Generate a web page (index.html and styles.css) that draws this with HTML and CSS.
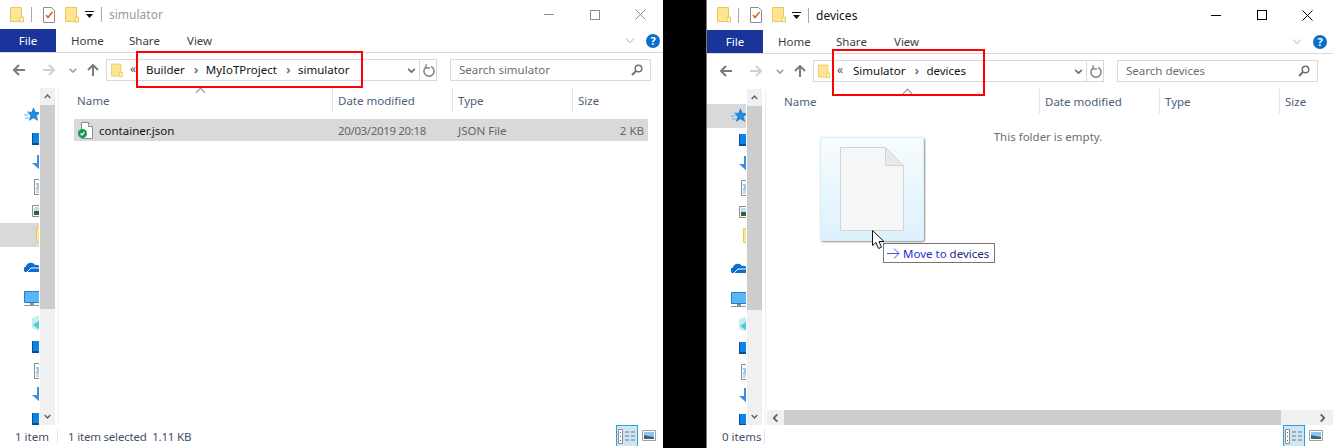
FILE: index.html
```html
<!DOCTYPE html>
<html lang="en">
<head>
    <meta charset="UTF-8">
    <title>Moving container.json to devices</title>
    <link rel="stylesheet" href="styles.css">
</head>
<body>
    <svg class="icon-defs" width="0" height="0">
        <symbol id="i-folder" viewBox="0 0 14 16"><path d="M.5.5h11v14H.5z" fill="#fde594" stroke="#e9c862"/><path d="M10 10h3.5v5H10z" fill="#fff3bd" stroke="#e9c862"/></symbol>
        <symbol id="i-check-doc" viewBox="0 0 14 16"><path d="M1.500.500h8l3 3v12h-11z" fill="#fff" stroke="#8c8c8c"/><path d="M4 8l2 2.500L10.500 5" fill="none" stroke="#e4572a" stroke-width="1.500"/></symbol>
        <symbol id="i-qa-arrow" viewBox="0 0 9 9"><path d="M0 1h9v1H0zM1 4h7L4.500 8z" fill="#111"/></symbol>
        <symbol id="i-close" viewBox="0 0 11 11"><path d="M.5.500l10 10M10.500.500l-10 10" fill="none" stroke="currentColor"/></symbol>
        <symbol id="i-back" viewBox="0 0 12 12"><path d="M6 1L1 6l5 5M1 6h11" fill="none" stroke="currentColor" stroke-width="2"/></symbol>
        <symbol id="i-forward" viewBox="0 0 12 12"><path d="M6 1l5 5-5 5M11 6H0" fill="none" stroke="currentColor" stroke-width="2"/></symbol>
        <symbol id="i-up" viewBox="0 0 12 12"><path d="M1 6l5-5 5 5M6 1v11" fill="none" stroke="currentColor" stroke-width="2"/></symbol>
        <symbol id="i-chevron" viewBox="0 0 10 6"><path d="M1 1l4 4 4-4" fill="none" stroke="currentColor" stroke-width="2"/></symbol>
        <symbol id="i-chevron-thin" viewBox="0 0 10 6"><path d="M1 .5l4 4 4-4" fill="none" stroke="currentColor"/></symbol>
        <symbol id="i-refresh" viewBox="0 0 12 14"><path d="M4 3.500a5 5 0 1 0 4 0" fill="none" stroke="currentColor" stroke-width="1.600"/><path d="M3 1v4h4" fill="none" stroke="currentColor" stroke-width="1.300"/></symbol>
        <symbol id="i-search" viewBox="0 0 12 12"><circle cx="7.500" cy="4.500" r="3.300" fill="none" stroke="#6f6f6f" stroke-width="1.500"/><path d="M5 7l-4 4" stroke="#6f6f6f" stroke-width="2"/></symbol>
        <symbol id="i-star" viewBox="0 0 16 16"><path d="M9.500 1l1.700 4.300 4.800.3-3.700 3 1.300 4.700-4.100-2.600-4 2.600 1.200-4.700L4 5.600l3.800-.3z" fill="#1c8ee6" stroke="#0c63b8" stroke-width=".6"/><path d="M0 8h4M1 11h4M3 5h3" stroke="#62b4f0"/></symbol>
        <symbol id="i-desktop" viewBox="0 0 16 16"><path d="M0 2h16v12H0z" fill="#0b84e4"/><path d="M0 12h16v2H0zM0 2h1v12H0z" fill="#0a4f96"/></symbol>
        <symbol id="i-download" viewBox="0 0 16 16"><path d="M5 0h6v8h5l-8 7-8-7h5z" fill="#3a8fe0"/></symbol>
        <symbol id="i-doc" viewBox="0 0 16 16"><path d="M2.500.5h11v15h-11z" fill="#fff" stroke="#8d8d8d"/><path d="M4 5h8M5 7h8M4 9h8" stroke="#2f8fe0"/><path d="M4 11h8M4 13h8" stroke="#aaa"/></symbol>
        <symbol id="i-picture" viewBox="0 0 16 16"><path d="M.5 2.500h15v11H.5z" fill="#fff" stroke="#8d8d8d"/><path d="M2 4h12v4H2z" fill="#bcdcf5"/><path d="M2 8h12v4H2z" fill="#3d5c46"/></symbol>
        <symbol id="i-cloud" viewBox="0 0 16 16"><path d="M1 13a3 3 0 0 1 1-5.500A5 5 0 0 1 11 6a3.500 3.500 0 0 1 5 3v4z" fill="#0b6fd0"/><path d="M3 13l4-4h9" fill="none" stroke="#fff"/></symbol>
        <symbol id="i-monitor" viewBox="0 0 16 16"><path d="M.5.5h15v11H.5z" fill="#58b8f5" stroke="#2b7dc8"/><path d="M6 12h4v2H6zM0 14h16v1H0z" fill="#7f97ab"/></symbol>
        <symbol id="i-cube" viewBox="0 0 16 16"><path d="M0 3l8-3v16l-8-3z" fill="#c5efef"/><path d="M1 10l7-5v10z" fill="#48cdd3"/></symbol>
        <symbol id="i-json" viewBox="0 0 16 17"><path d="M3.500.5h7l4 4v12h-11z" fill="#fff" stroke="#8d8d8d"/><path d="M10.500.5v4h4" fill="#eee" stroke="#8d8d8d"/><circle cx="4.500" cy="11.500" r="4.500" fill="#0f9d4b"/><path d="M2.500 11.500l1.500 1.500 2.500-3" fill="none" stroke="#fff" stroke-width="1.200"/></symbol>
        <symbol id="i-details" viewBox="0 0 18 15"><path d="M.5.5h4v14h-4z" fill="#fff" stroke="#8c8c8c"/><path d="M2 3h1v1H2z" fill="#d33"/><path d="M2 7h1v1H2zM2 11h1v1H2z" fill="#555"/><path d="M7 3h4M13 3h4M7 7h4M13 7h4M7 11h4M13 11h4" stroke="#777"/></symbol>
        <symbol id="i-thumbs" viewBox="0 0 14 11"><path d="M.5.500h13v10H.5z" fill="#fff" stroke="#a0a0a0"/><path d="M2 2h10v7H2z" fill="#8fc4ee"/><path d="M2 9V5l4 1 6 1v2z" fill="#3f6470"/></symbol>
        <symbol id="i-move" viewBox="0 0 13 11"><path d="M7 .500l5 5-5 5M12 5.500H0" fill="none" stroke="currentColor"/></symbol>
    </svg>

    <section class="window window-left">
        <div class="titlebar">
            <svg class="qa-folder"><use href="#i-folder"/></svg>
            <span class="qa-sep"></span>
            <svg class="qa-doc"><use href="#i-check-doc"/></svg>
            <svg class="qa-folder qa-folder-2"><use href="#i-folder"/></svg>
            <svg class="qa-arrow"><use href="#i-qa-arrow"/></svg>
            <span class="qa-sep"></span>
            <span class="title">simulator</span>
            <div class="win-controls">
                <span class="win-btn"><span class="win-min"></span></span>
                <span class="win-btn"><span class="win-max"></span></span>
                <span class="win-btn"><svg class="win-close"><use href="#i-close"/></svg></span>
            </div>
        </div>
        <div class="ribbon">
            <span class="tab-file">File</span>
            <span class="tab">Home</span>
            <span class="tab">Share</span>
            <span class="tab">View</span>
            <svg class="ribbon-chevron"><use href="#i-chevron-thin"/></svg>
            <span class="help">?</span>
        </div>
        <div class="addressbar">
            <svg class="nav-back"><use href="#i-back"/></svg>
            <svg class="nav-forward"><use href="#i-forward"/></svg>
            <svg class="nav-recent"><use href="#i-chevron"/></svg>
            <svg class="nav-up"><use href="#i-up"/></svg>
            <div class="address">
                <svg class="address-folder"><use href="#i-folder"/></svg>
                <span class="overflow">&laquo;</span>
                <span class="crumb">Builder</span><span class="crumb-sep">&rsaquo;</span>
                <span class="crumb">MyIoTProject</span><span class="crumb-sep">&rsaquo;</span>
                <span class="crumb">simulator</span>
                <svg class="address-chevron"><use href="#i-chevron"/></svg>
                <span class="address-refresh"><svg><use href="#i-refresh"/></svg></span>
            </div>
            <div class="search">
                <span>Search simulator</span>
                <svg><use href="#i-search"/></svg>
            </div>
        </div>
        <div class="main">
            <nav class="tree">
                <div class="tree-row"><svg><use href="#i-star"/></svg></div>
                <div class="tree-row child"><svg><use href="#i-desktop"/></svg></div>
                <div class="tree-row child"><svg><use href="#i-download"/></svg></div>
                <div class="tree-row child"><svg><use href="#i-doc"/></svg></div>
                <div class="tree-row child"><svg><use href="#i-picture"/></svg></div>
                <div class="tree-row child selected"><svg class="tree-folder"><use href="#i-folder"/></svg></div>
                <div class="tree-row group"><svg><use href="#i-cloud"/></svg></div>
                <div class="tree-row group"><svg><use href="#i-monitor"/></svg></div>
                <div class="tree-row child"><svg><use href="#i-cube"/></svg></div>
                <div class="tree-row child"><svg><use href="#i-desktop"/></svg></div>
                <div class="tree-row child"><svg><use href="#i-doc"/></svg></div>
                <div class="tree-row child"><svg><use href="#i-download"/></svg></div>
                <div class="tree-row child"><svg><use href="#i-desktop"/></svg></div>
            </nav>
            <div class="vscroll">
                <svg class="scroll-up"><use href="#i-chevron"/></svg>
                <div class="vscroll-thumb"></div>
                <svg class="scroll-down"><use href="#i-chevron"/></svg>
            </div>
            <div class="files">
                <span class="sort-caret"></span>
                <div class="columns">
                    <span class="col-name">Name</span>
                    <span class="col">Date modified</span>
                    <span class="col">Type</span>
                    <span class="col">Size</span>
                </div>
                <div class="file-row">
                    <span class="file-name"><svg><use href="#i-json"/></svg>container.json</span>
                    <span class="file-meta file-date">20/03/2019 20:18</span>
                    <span class="file-meta">JSON File</span>
                    <span class="file-size">2 KB</span>
                </div>
            </div>
        </div>
        <div class="status">
            <span class="status-count">1 item</span>
            <span class="status-sel">1 item selected&nbsp; 1.11 KB</span>
            <span class="view-btn view-on"><svg><use href="#i-details"/></svg></span>
            <span class="view-btn"><svg class="thumbs"><use href="#i-thumbs"/></svg></span>
        </div>
        <div class="callout callout-left"></div>
    </section>

    <section class="window window-right">
        <div class="titlebar">
            <svg class="qa-folder"><use href="#i-folder"/></svg>
            <span class="qa-sep"></span>
            <svg class="qa-doc"><use href="#i-check-doc"/></svg>
            <svg class="qa-folder qa-folder-2"><use href="#i-folder"/></svg>
            <svg class="qa-arrow"><use href="#i-qa-arrow"/></svg>
            <span class="qa-sep"></span>
            <span class="title">devices</span>
            <div class="win-controls">
                <span class="win-btn"><span class="win-min"></span></span>
                <span class="win-btn"><span class="win-max"></span></span>
                <span class="win-btn"><svg class="win-close"><use href="#i-close"/></svg></span>
            </div>
        </div>
        <div class="ribbon">
            <span class="tab-file">File</span>
            <span class="tab">Home</span>
            <span class="tab">Share</span>
            <span class="tab">View</span>
            <svg class="ribbon-chevron"><use href="#i-chevron-thin"/></svg>
            <span class="help">?</span>
        </div>
        <div class="addressbar">
            <svg class="nav-back"><use href="#i-back"/></svg>
            <svg class="nav-forward"><use href="#i-forward"/></svg>
            <svg class="nav-recent"><use href="#i-chevron"/></svg>
            <svg class="nav-up"><use href="#i-up"/></svg>
            <div class="address">
                <svg class="address-folder"><use href="#i-folder"/></svg>
                <span class="overflow">&laquo;</span>
                <span class="crumb">Simulator</span><span class="crumb-sep">&rsaquo;</span>
                <span class="crumb">devices</span>
                <svg class="address-chevron"><use href="#i-chevron"/></svg>
                <span class="address-refresh"><svg><use href="#i-refresh"/></svg></span>
            </div>
            <div class="search">
                <span>Search devices</span>
                <svg><use href="#i-search"/></svg>
            </div>
        </div>
        <div class="main">
            <nav class="tree">
                <div class="tree-row selected"><svg><use href="#i-star"/></svg></div>
                <div class="tree-row child"><svg><use href="#i-desktop"/></svg></div>
                <div class="tree-row child"><svg><use href="#i-download"/></svg></div>
                <div class="tree-row child"><svg><use href="#i-doc"/></svg></div>
                <div class="tree-row child"><svg><use href="#i-picture"/></svg></div>
                <div class="tree-row child"><svg class="tree-folder"><use href="#i-folder"/></svg></div>
                <div class="tree-row group"><svg><use href="#i-cloud"/></svg></div>
                <div class="tree-row group"><svg><use href="#i-monitor"/></svg></div>
                <div class="tree-row child"><svg><use href="#i-cube"/></svg></div>
                <div class="tree-row child"><svg><use href="#i-desktop"/></svg></div>
                <div class="tree-row child"><svg><use href="#i-doc"/></svg></div>
                <div class="tree-row child"><svg><use href="#i-download"/></svg></div>
                <div class="tree-row child"><svg><use href="#i-desktop"/></svg></div>
            </nav>
            <div class="vscroll">
                <svg class="scroll-up"><use href="#i-chevron"/></svg>
                <div class="vscroll-thumb"></div>
                <svg class="scroll-down"><use href="#i-chevron"/></svg>
            </div>
            <div class="files">
                <span class="sort-caret"></span>
                <div class="columns">
                    <span class="col-name">Name</span>
                    <span class="col">Date modified</span>
                    <span class="col">Type</span>
                    <span class="col">Size</span>
                </div>
                <p class="empty">This folder is empty.</p>
                <div class="hscroll">
                    <span class="hscroll-btn"><svg class="arrow-left"><use href="#i-chevron"/></svg></span>
                    <span class="hscroll-thumb"></span>
                    <span class="hscroll-btn hscroll-end"><svg class="arrow-right"><use href="#i-chevron"/></svg></span>
                </div>
            </div>
        </div>
        <div class="status">
            <span class="status-count">0 items</span>
            <span class="view-btn view-on"><svg><use href="#i-details"/></svg></span>
            <span class="view-btn"><svg class="thumbs"><use href="#i-thumbs"/></svg></span>
        </div>
        <div class="callout callout-right"></div>

        <!-- drag ghost and its tooltip sit over the file list -->
        <div class="drag-ghost">
            <svg viewBox="0 0 64 84"><path d="M.5.500h45l18 18v65H.5z" fill="#f5f6f8" stroke="#cfd3d6"/><path d="M45.500.500v18h18z" fill="#e8e9ea" stroke="#cfd3d6"/></svg>
        </div>
        <svg class="drag-cursor" viewBox="0 0 13 20"><path d="M.5.500v15l3.500-3 2.500 6 3-1.300-2.500-5.700h5z" fill="#fff" stroke="#111"/></svg>
        <div class="drag-tip"><svg class="drag-tip-arrow"><use href="#i-move"/></svg><span class="drag-tip-verb">Move to</span> devices</div>
    </section>
</body>
</html>
```

FILE: styles.css
```css
* {
    box-sizing: border-box;
}
body {
    margin: 0;
    width: 1333px;
    height: 448px;
    overflow: hidden;
    background: #000;
    display: flex;
    justify-content: space-between;
    font-family: "Noto Sans", "Open Sans", sans-serif;
    font-size: 11.5px;
    color: #1a1a1a;
}
svg {
    display: block;
    flex: none;
}
.icon-defs {
    position: absolute;
}

.window {
    position: relative;
    height: 448px;
    background: #fff;
    display: flex;
    flex-direction: column;
    overflow: hidden;
}
.window-left {
    width: 663px;
    --edge: 0px;
    --title-h: 29px;
    --title-color: #9a9a9a;
    --control-color: #8f8f8f;
}
.window-right {
    width: 627px;
    border-left: 1px solid #777;
    --edge: 3px;
    --title-h: 30px;
    --title-color: #111;
    --control-color: #000;
}

/* title bar */
.titlebar {
    height: var(--title-h);
    display: flex;
    align-items: center;
    padding-left: 10px;
    flex: none;
}
.qa-folder {
    width: 14px;
    height: 16px;
}
.qa-folder-2 {
    margin-left: 9px;
}
.qa-sep {
    width: 1px;
    height: 15px;
    margin-left: 7px;
    background: #a8a8a8;
}
.qa-doc {
    width: 14px;
    height: 16px;
    margin-left: 10px;
}
.qa-arrow {
    width: 9px;
    height: 9px;
    margin-left: 6px;
}
.title {
    margin-left: 7px;
    font-size: 12px;
    color: var(--title-color);
}
.win-controls {
    margin-left: auto;
    padding-right: var(--edge);
    display: flex;
    color: var(--control-color);
}
.win-btn {
    width: 45.500px;
    height: 20px;
    display: flex;
    align-items: center;
    justify-content: center;
}
.win-min {
    width: 10px;
    height: 1px;
    background: currentColor;
}
.win-max {
    width: 10px;
    height: 10px;
    border: 1px solid currentColor;
}
.win-close {
    width: 11px;
    height: 11px;
}

/* ribbon */
.ribbon {
    height: 24px;
    display: flex;
    align-items: center;
    border-bottom: 1px solid #dadada;
    padding-right: calc(3px + var(--edge));
    flex: none;
}
.tab-file {
    width: 56px;
    height: 23px;
    margin-right: 15px;
    background: #19359b;
    color: #fff;
    display: flex;
    align-items: center;
    justify-content: center;
}
.tab {
    width: 58px;
    color: #3c3c3c;
}
.ribbon-chevron {
    width: 10px;
    height: 6px;
    margin-left: auto;
    color: #a9a9a9;
}
.help {
    width: 14px;
    height: 14px;
    margin-left: 11px;
    border-radius: 50%;
    background: #0a6fc9;
    color: #fff;
    font-size: 11px;
    font-weight: 700;
    line-height: 14px;
    text-align: center;
}

/* address bar */
.addressbar {
    height: 35px;
    padding: 6px calc(12px + var(--edge)) 7px 0;
    display: flex;
    align-items: center;
    flex: none;
}
.nav-back, .nav-forward, .nav-up {
    width: 12px;
    height: 12px;
}
.nav-back {
    margin-left: 13px;
    color: #7b7b7b;
}
.nav-forward {
    margin-left: 18px;
    color: #d0d0d0;
}
.nav-recent {
    width: 8px;
    height: 5px;
    margin-left: 14px;
    color: #a0a0a0;
}
.nav-up {
    margin-left: 10px;
    color: #7b7b7b;
}
.address {
    flex: 1;
    height: 22px;
    margin-left: 7px;
    padding-left: 4px;
    border: 1px solid #d9d9d9;
    display: flex;
    align-items: center;
    color: #111;
}
.address-folder {
    width: 12px;
    height: 15px;
}
.overflow {
    margin: 0 8px 3px 7px;
    width: 8px;
    color: #555;
    font-size: 12px;
}
.crumb {
    margin-bottom: 2px;
}
.crumb-sep {
    margin: -3px 8px 0 9px;
    width: 4px;
    color: #777;
    font-weight: 700;
    font-size: 13px;
}
.address-chevron {
    width: 9px;
    height: 5px;
    margin-left: auto;
    color: #6f6f6f;
}
.address-refresh {
    height: 20px;
    width: 17px;
    margin-left: 3px;
    border-left: 1px solid #d9d9d9;
    padding: 3px 0 0 3px;
    color: #8a8a8a;
}
.address-refresh svg {
    width: 12px;
    height: 14px;
}
.search {
    width: 201px;
    height: 22px;
    margin-left: 13px;
    padding: 0 7px 0 8px;
    border: 1px solid #d9d9d9;
    display: flex;
    align-items: center;
    justify-content: space-between;
    color: #6d6d6d;
}
.search span {
    margin-bottom: 2px;
}
.search svg {
    width: 12px;
    height: 12px;
}

/* tree and its scrollbar */
.main {
    flex: 1;
    min-height: 0;
    display: flex;
}
.tree {
    width: 40px;
    padding-top: 15px;
    overflow: hidden;
    flex: none;
}
.tree-row {
    height: 24px;
    width: 39px;
    padding-left: 24px;
    display: flex;
    align-items: center;
    overflow: hidden;
}
.tree-row.child {
    padding-left: 32px;
}
.tree-row.group {
    margin-top: 8px;
}
.tree-row.selected {
    background: #d9d9d9;
}
.tree-row svg {
    width: 16px;
    height: 16px;
}
.tree-row .tree-folder {
    margin-left: 3px;
}
.vscroll {
    position: relative;
    width: 15px;
    flex: none;
    background: #f0f0f0;
    padding-top: 17px;
    color: #5f5f5f;
}
.vscroll-thumb {
    height: 204px;
    background: #cdcdcd;
}
.scroll-up, .scroll-down {
    position: absolute;
    left: 4px;
    width: 7px;
    height: 5px;
}
.scroll-up {
    top: 6px;
    transform: rotate(180deg);
}
.scroll-down {
    bottom: 6px;
}

/* file list */
.files {
    position: relative;
    flex: 1;
    min-width: 0;
    margin-left: 3px;
    border-left: 1px solid #f0f0f0;
    display: flex;
    flex-direction: column;
    padding-left: 15px;
}
.sort-caret {
    position: absolute;
    left: 138px;
    top: 0;
    width: 7px;
    height: 7px;
    border-left: 1px solid #8a8a8a;
    border-top: 1px solid #8a8a8a;
    transform: translateY(1px) rotate(45deg);
}
.columns {
    height: 25px;
    display: grid;
    grid-template-columns: 258px 120px 120px 80px;
    color: #4c607a;
    flex: none;
}
.col-name {
    padding: 5px 0 0 3px;
}
.col {
    padding: 5px 0 0 5px;
    border-left: 1px solid #e5e5e5;
}
.file-row {
    height: 22px;
    width: 574px;
    margin-top: 6px;
    background: #d9d9d9;
    display: grid;
    grid-template-columns: 258px 120px 120px 76px;
    align-items: center;
    color: #666;
}
.file-name {
    display: flex;
    align-items: center;
    gap: 5px;
    padding-left: 4px;
    color: #111;
}
.file-name svg {
    width: 16px;
    height: 17px;
}
.file-meta {
    padding-left: 6px;
}
.file-date {
    letter-spacing: -.35px;
}
.file-size {
    text-align: right;
    padding-right: 4px;
}
.empty {
    margin: 15px 3px 0 -15px;
    text-align: center;
    line-height: 16px;
    color: #6d6d6d;
}
.hscroll {
    height: 15px;
    margin: auto 0 0 -14px;
    display: flex;
    background: #f0f0f0;
    color: #5f5f5f;
}
.hscroll-btn {
    width: 17px;
    display: flex;
    align-items: center;
    justify-content: center;
    flex: none;
}
.hscroll-end {
    flex: 1;
    justify-content: flex-end;
    padding-right: 6px;
}
.hscroll-thumb {
    width: 497px;
    background: #cdcdcd;
    flex: none;
}
.arrow-left, .arrow-right {
    width: 9px;
    height: 6px;
}
.arrow-left {
    transform: rotate(90deg);
}
.arrow-right {
    transform: rotate(-90deg);
}

/* status bar */
.status {
    height: 23px;
    display: flex;
    align-items: center;
    padding: 0 calc(3px + var(--edge)) 0 15px;
    color: #3f4f6a;
    flex: none;
}
.status-count {
    width: 43px;
    border-right: 1px solid #e5e5e5;
}
.status-sel {
    margin-left: 10px;
    letter-spacing: -.2px;
}
.view-btn {
    height: 21px;
    width: 22px;
    margin-bottom: 2px;
    display: flex;
    align-items: center;
    justify-content: center;
}
.view-on {
    margin-left: auto;
    background: #cce6f5;
    border: 1px solid #2aa0dc;
    border-bottom: 0;
}
.view-on svg {
    width: 18px;
    height: 15px;
}
.thumbs {
    width: 14px;
    height: 11px;
}

/* red annotations drawn over the screenshots */
.callout {
    position: absolute;
    border: 2px solid #f00;
}
.callout-left {
    left: 136px;
    top: 51px;
    width: 227px;
    height: 37px;
}
.callout-right {
    left: 125px;
    top: 49px;
    width: 153px;
    height: 47px;
}

/* drag in progress */
.drag-ghost {
    position: absolute;
    left: 113px;
    top: 137px;
    width: 104px;
    height: 104px;
    padding: 9px 0 0 19px;
    border: 1px solid #d4eefa;
    border-radius: 3px;
    background: linear-gradient(#f7fcff, #ddf1fb);
    box-shadow: 1px 1px 2px #8f8f8f;
}
.drag-ghost svg {
    width: 64px;
    height: 84px;
}
.drag-cursor {
    position: absolute;
    left: 165px;
    top: 230px;
    width: 13px;
    height: 20px;
    z-index: 2;
}
.drag-tip {
    position: absolute;
    left: 176px;
    top: 243px;
    width: 112px;
    height: 20px;
    padding-left: 3px;
    border: 1px solid #767676;
    background: #fff;
    color: #1b2a7a;
    display: flex;
    align-items: center;
    white-space: pre;
}
.drag-tip-arrow {
    width: 13px;
    height: 11px;
    margin-right: 3px;
    color: #3f55e0;
}
.drag-tip-verb {
    color: #2a2ad0;
}
```
